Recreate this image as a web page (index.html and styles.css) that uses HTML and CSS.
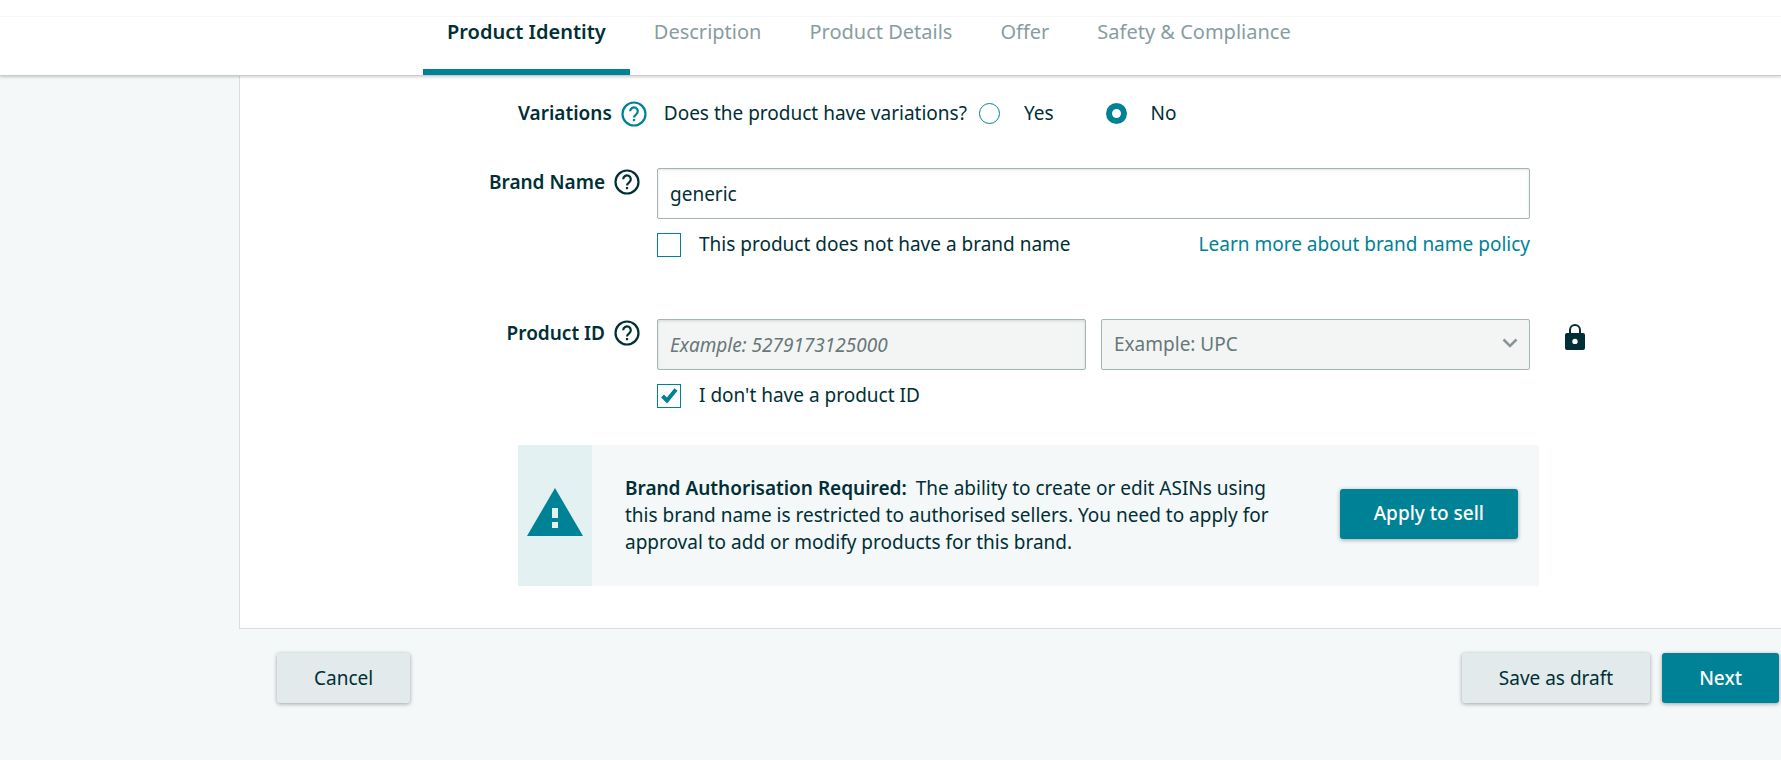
FILE: index.html
```html
<!DOCTYPE html>
<html lang="en">
<head>
    <meta charset="UTF-8">
    <meta name="viewport" content="width=device-width, initial-scale=1.0">
    <title>Product Identity</title>
    <link rel="stylesheet" href="styles.css">
</head>
<body>
    <header class="header">
        <nav class="tabs">
            <a class="tab active" href="#identity">Product Identity</a>
            <a class="tab" href="#description">Description</a>
            <a class="tab" href="#details">Product Details</a>
            <a class="tab" href="#offer">Offer</a>
            <a class="tab" href="#safety">Safety &amp; Compliance</a>
        </nav>
    </header>

    <form class="form">
        <main class="card" id="identity">
            <div class="variations">
                <span class="label">Variations</span>
                <button class="help teal" type="button" aria-label="Help on variations">
                    <svg viewBox="0 0 26 26"><circle cx="13" cy="13" r="11.5"/><path d="M9.2 10.2a3.8 3.8 0 1 1 6 3.1c-1.300.9-2.200 1.500-2.200 3.200"/><path d="M13 18v2.200"/></svg>
                </button>
                <span class="question">Does the product have variations?</span>
                <label class="choice"><input class="radio" type="radio" name="variations">Yes</label>
                <label class="choice"><input class="radio" type="radio" name="variations" checked>No</label>
            </div>

            <div class="row">
                <div class="row-label">
                    <label class="label" for="brand">Brand Name</label>
                    <button class="help" type="button" aria-label="Help on brand name">
                        <svg viewBox="0 0 26 26"><circle cx="13" cy="13" r="11.5"/><path d="M9.2 10.2a3.8 3.8 0 1 1 6 3.1c-1.300.9-2.200 1.500-2.200 3.200"/><path d="M13 18v2.200"/></svg>
                    </button>
                </div>
                <div class="field">
                    <input class="box" id="brand" type="text" value="generic">
                    <div class="under">
                        <label class="check"><input class="checkbox" type="checkbox">This product does not have a brand name</label>
                        <a class="link" href="#policy">Learn more about brand name policy</a>
                    </div>
                </div>
            </div>

            <div class="row">
                <div class="row-label">
                    <label class="label" for="product-id">Product ID</label>
                    <button class="help" type="button" aria-label="Help on product ID">
                        <svg viewBox="0 0 26 26"><circle cx="13" cy="13" r="11.5"/><path d="M9.2 10.2a3.8 3.8 0 1 1 6 3.1c-1.300.9-2.200 1.500-2.200 3.200"/><path d="M13 18v2.200"/></svg>
                    </button>
                </div>
                <div class="field">
                    <div class="pair">
                        <input class="box" id="product-id" type="text" placeholder="Example: 5279173125000" disabled>
                        <div class="select-wrap">
                            <select class="box" aria-label="Product ID type" disabled>
                                <option>Example: UPC</option>
                            </select>
                            <svg class="chevron" viewBox="0 0 16 10"><path d="M1.500 1.500l6.500 6.500 6.500-6.500"/></svg>
                        </div>
                    </div>
                    <div class="under">
                        <label class="check"><input class="checkbox" type="checkbox" checked>I don't have a product ID</label>
                    </div>
                </div>
                <svg class="lock" viewBox="0 0 20 26"><path fill-rule="evenodd" d="M4 9V6a6 6 0 0 1 12 0v3h2a2 2 0 0 1 2 2v13a2 2 0 0 1-2 2H2a2 2 0 0 1-2-2V11a2 2 0 0 1 2-2zM6 9h8V6a4 4 0 0 0-8 0zM10 14.700a2.700 2.700 0 1 0 0 5.400a2.700 2.700 0 1 0 0-5.400z"/></svg>
            </div>

            <section class="alert">
                <div class="alert-icon">
                    <svg viewBox="0 0 56 48"><path fill-rule="evenodd" d="M28 0l28 48H0zM25 20v10h6V20zM25 34v6h6v-6z"/></svg>
                </div>
                <p class="alert-text"><b>Brand Authorisation Required:</b> The ability to create or edit ASINs using this brand name is restricted to authorised sellers. You need to apply for approval to add or modify products for this brand.</p>
                <button class="btn primary" type="button">Apply to sell</button>
            </section>
        </main>

        <footer class="footer">
            <button class="btn" type="button">Cancel</button>
            <div class="footer-right">
                <button class="btn" type="button">Save as draft</button>
                <button class="btn primary" type="submit">Next</button>
            </div>
        </footer>
    </form>
</body>
</html>
```
FILE: styles.css
```css
* {
    box-sizing: border-box;
}

body {
    margin: 0;
    min-height: 100vh;
    background: #f4f8f9;
    color: #002f36;
    font-family: "Noto Sans", sans-serif;
    font-size: 19px;
    line-height: 27px;
}

input, select, button {
    font: inherit;
    color: inherit;
    margin: 0;
}

/* tabs */
.header {
    position: relative;
    background: #fff;
    padding-top: 16px;
    border-bottom: 1px solid #c8cccc;
    box-shadow: 0 1px 3px rgba(0, 0, 0, 0.2);
}

.tabs {
    display: flex;
    padding-left: 423px;
    border-top: 1px solid #f7f7f7;
}

.tab {
    padding: 1px 24px 24px;
    border-bottom: 6px solid transparent;
    color: #879d9f;
    font-size: 20px;
    text-decoration: none;
    white-space: nowrap;
}

.tab.active {
    border-color: #008296;
    color: #002f36;
    font-weight: 600;
}

/* form card */
.card {
    margin-left: 239px;
    padding: 24px 242px 42px 278px;
    background: #fff;
    border: 1px solid #dadddd;
    border-width: 0 0 1px 1px;
}

.label {
    font-weight: 600;
}

.variations {
    display: flex;
    align-items: center;
    margin-bottom: 41px;
}

.help {
    width: 26px;
    height: 26px;
    margin-left: 9px;
    padding: 0;
    border: 0;
    background: none;
    flex: none;
}

.help svg {
    display: block;
    fill: none;
    stroke: currentColor;
    stroke-width: 2.2;
}

.teal {
    color: #008296;
}

.question {
    margin: 0 12px 0 17px;
}

.choice {
    display: flex;
    align-items: center;
    gap: 24px;
    margin-right: 52px;
}

.radio {
    appearance: none;
    width: 21px;
    height: 21px;
    border: 1px solid #008296;
    border-radius: 50%;
    background: #fff;
}

.radio:checked {
    border-width: 6px;
}

.row {
    display: grid;
    grid-template-columns: 122px 1fr 20px;
    column-gap: 17px;
    margin-right: -46px;
    margin-bottom: 61px;
}

.row + .row {
    margin-bottom: 36px;
}

.row-label {
    display: flex;
    justify-content: flex-end;
    height: 28px;
    padding-top: 1px;
    white-space: nowrap;
}

.field {
    margin-right: 18px;
}

.box {
    display: block;
    width: 100%;
    height: 51px;
    padding: 0 12px;
    border: 1px solid #a5b4b6;
    border-radius: 2px;
    background: #fff;
    box-shadow: inset 0 1px 3px rgba(0, 0, 0, 0.12);
}

.box:disabled {
    background: #f3f5f4;
    color: #687778;
    opacity: 1;
}

.box::placeholder {
    color: #687778;
    font-style: italic;
    opacity: 1;
}

select.box {
    appearance: none;
    box-shadow: none;
}

.pair {
    display: grid;
    grid-template-columns: 1fr 1fr;
    gap: 15px;
}

.select-wrap {
    position: relative;
}

.chevron {
    position: absolute;
    top: 19px;
    right: 12px;
    width: 16px;
    height: 10px;
    fill: none;
    stroke: #879596;
    stroke-width: 2.5;
}

.under {
    display: flex;
    justify-content: space-between;
    margin-top: 12px;
}

.check {
    display: flex;
    align-items: center;
    gap: 18px;
}

.checkbox {
    appearance: none;
    width: 24px;
    height: 24px;
    border: 1px solid #008296;
    background: #fff;
}

.checkbox:checked {
    background: #fff url("data:image/svg+xml,%3Csvg xmlns='http://www.w3.org/2000/svg' viewBox='0 0 22 22'%3E%3Cpath d='M4.500 11l4.500 4.500 9-11' fill='none' stroke='%23008296' stroke-width='4'/%3E%3C/svg%3E");
}

.link {
    color: #008296;
    text-decoration: none;
}

.lock {
    width: 20px;
    height: 26px;
    margin-top: 5px;
    fill: #002f36;
}

/* brand alert */
.alert {
    display: flex;
    align-items: center;
    padding-right: 21px;
    border-radius: 2px;
    background: #f4f8f9;
}

.alert-icon {
    display: flex;
    align-items: center;
    align-self: stretch;
    padding: 0 9px 8px;
    background: #e3f1f3;
}

.alert-icon svg {
    width: 56px;
    height: 48px;
    fill: #008296;
}

.alert-text {
    flex: 1;
    margin: 0;
    padding: 30px 56px 30px 33px;
}

.alert-text b {
    margin-right: 4px;
    font-weight: 600;
}

.btn {
    height: 50px;
    padding: 0 37px;
    border: 0;
    border-radius: 3px;
    background: #e2eaeb;
    box-shadow: 0 1px 4px rgba(0, 0, 0, 0.35);
    white-space: nowrap;
}

.btn.primary {
    background: #008296;
    color: #fff;
    font-weight: 500;
}

.alert .btn {
    margin-bottom: 4px;
    padding: 0 34px;
}

.footer {
    display: flex;
    justify-content: space-between;
    margin-left: 239px;
    padding: 24px 2px 56px 38px;
}

.footer-right {
    display: flex;
    gap: 12px;
}
```
